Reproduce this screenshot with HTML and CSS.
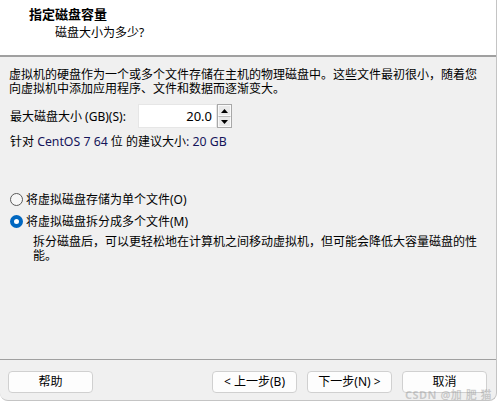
FILE: index.html
```html
<!DOCTYPE html>
<html lang="zh-CN">
<head>
<meta charset="utf-8">
<title>指定磁盘容量</title>
<link rel="stylesheet" href="styles.css">
</head>
<body>
<div class="window">
  <header class="head">
    <div class="title">指定磁盘容量</div>
    <div class="subtitle">磁盘大小为多少?</div>
  </header>
  <main class="content">
    <p class="intro">虚拟机的硬盘作为一个或多个文件存储在主机的物理磁盘中。这些文件最初很小，随着您向虚拟机中添加应用程序、文件和数据而逐渐变大。</p>
    <div class="size-row">
      <span class="label">最大磁盘大小 (GB)(S):</span>
      <div class="spin">
        <div class="spin-value">20.0</div>
        <div class="spin-btns">
          <span class="spin-btn"><svg width="7" height="4" viewBox="0 0 7 4"><path d="M0 4 L3.5 0 L7 4 Z" fill="#000"/></svg></span>
          <span class="spin-btn"><svg width="7" height="4" viewBox="0 0 7 4"><path d="M0 0 L7 0 L3.5 4 Z" fill="#000"/></svg></span>
        </div>
      </div>
    </div>
    <p class="rec">针对 <span class="latin">CentOS 7 64</span> 位 的建议大小<span class="latin">: 20 GB</span></p>
    <div class="options">
      <div class="radio-row"><span class="radio"></span><span>将虚拟磁盘存储为单个文件(O)</span></div>
      <div class="radio-row"><span class="radio checked"></span><span>将虚拟磁盘拆分成多个文件(M)</span></div>
      <p class="desc">拆分磁盘后，可以更轻松地在计算机之间移动虚拟机，但可能会降低大容量磁盘的性能。</p>
    </div>
  </main>
  <footer class="foot">
    <button class="btn">帮助</button>
    <div class="nav">
      <button class="btn">&lt; 上一步(B)</button>
      <button class="btn">下一步(N) &gt;</button>
      <button class="btn">取消</button>
    </div>
  </footer>
  <div class="watermark">CSDN @加 肥 猫</div>
</div>
</body>
</html>
```
FILE: styles.css
```css
* { box-sizing: border-box; }
html, body { margin: 0; padding: 0; background: #ffffff; }
body {
  font-family: "Noto Sans", "Noto Sans CJK SC", sans-serif;
  font-size: 12px;
  color: #000;
}
.window {
  position: relative;
  width: 497px;
  height: 401px;
  background: #f0f0f0;
  display: flex;
  flex-direction: column;
  border-radius: 0 0 8px 8px;
  border-right: 1px solid #c4c4c4;
  border-bottom: 1px solid #c4c4c4;
  overflow: hidden;
}
.head {
  height: 57px;
  background: #fff;
  padding: 6px 0 0 29px;
  border-bottom: 2px solid #a0a0a0;
}
.title {
  font-weight: bold;
  font-size: 13px;
  line-height: 16px;
}
.subtitle {
  margin: 3px 0 0 26px;
  line-height: 16px;
}
.content {
  flex: 1;
  padding: 11px 14px 0 9px;
}
.intro, .rec, .desc { margin: 0; line-height: 14px; }
.size-row {
  display: flex;
  align-items: center;
  margin-top: 8px;
  height: 24px;
}
.label { width: 129px; padding-left: 1px; }
.spin { display: flex; height: 24px; }
.spin-value {
  width: 79px;
  background: #fff;
  border: 1px solid #e6e6e6;
  text-align: right;
  font-size: 13px;
  line-height: 22px;
  padding-right: 4px;
}
.spin-btns {
  width: 15px;
  display: flex;
  flex-direction: column;
  border: 1px solid #a8a8a8;
  background: #e9e9e9;
}
.spin-btn {
  flex: 1;
  display: flex;
  align-items: center;
  justify-content: center;
  border: 1px solid #fafafa;
}
.spin-btn + .spin-btn { border-top: 1px solid #b9b9b9; }
.rec { margin-top: 7px; padding-left: 1px; }
.latin { color: #14145a; font-size: 12.3px; }
.options { margin-top: 39px; }
.radio-row {
  display: flex;
  align-items: center;
  height: 22px;
  gap: 3px;
  padding-left: 1px;
}
.radio {
  width: 13px;
  height: 13px;
  border-radius: 50%;
  border: 1px solid #5a5a5a;
  background: #f7f7f7;
  flex: none;
}
.radio.checked {
  border: 4px solid #0067c0;
  background: #fff;
}
.desc { margin-top: 3px; padding-left: 24px; }
.foot {
  height: 41px;
  border-top: 1px solid #a0a0a0;
  display: flex;
  justify-content: space-between;
  padding: 11px 9px 0 8px;
}
.nav { display: flex; gap: 10px; }
.btn {
  width: 85px;
  height: 22px;
  font: inherit;
  font-size: 12px;
  line-height: 12px;
  color: #000;
  background: #fdfdfd;
  border: 1px solid #d0d0d0;
  border-radius: 4px;
  padding: 0;
  display: flex;
  align-items: center;
  justify-content: center;
}
.watermark {
  position: absolute;
  right: 4px;
  bottom: 0;
  font-size: 11px;
  line-height: 10px;
  font-weight: bold;
  color: rgba(150, 150, 150, 0.45);
  letter-spacing: 0.5px;
}
```
